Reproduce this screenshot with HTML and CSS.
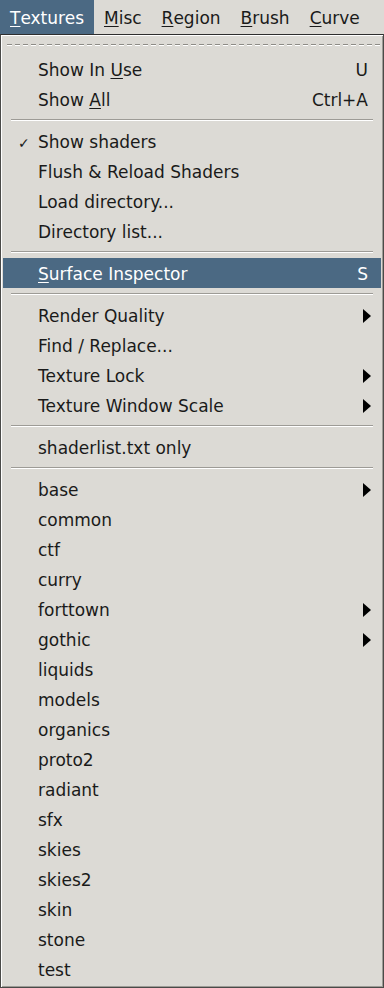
FILE: index.html
```html
<!DOCTYPE html>
<html lang="en">
<head>
    <meta charset="UTF-8">
    <meta name="viewport" content="width=device-width, initial-scale=1.0">
    <title>Textures menu</title>
    <link rel="stylesheet" href="styles.css">
</head>
<body>
    <div class="menubar">
        <span class="bar-item open"><u>T</u>extures</span>
        <span class="bar-item"><u>M</u>isc</span>
        <span class="bar-item"><u>R</u>egion</span>
        <span class="bar-item"><u>B</u>rush</span>
        <span class="bar-item"><u>C</u>urve</span>
    </div>

    <div class="menu">
        <div class="tearoff"></div>

        <div class="item"><span class="label">Show In <u>U</u>se</span><span class="accel">U</span></div>
        <div class="item"><span class="label">Show <u>A</u>ll</span><span class="accel">Ctrl+A</span></div>
        <div class="sep"></div>

        <div class="item"><span class="check">&#10003;</span><span class="label">Show shaders</span></div>
        <div class="item"><span class="label">Flush &amp; Reload Shaders</span></div>
        <div class="item"><span class="label">Load directory...</span></div>
        <div class="item"><span class="label">Directory list...</span></div>
        <div class="sep"></div>

        <div class="item active"><span class="label"><u>S</u>urface Inspector</span><span class="accel">S</span></div>
        <div class="sep"></div>

        <div class="item"><span class="label">Render Quality</span><span class="arrow"></span></div>
        <div class="item"><span class="label">Find / Replace...</span></div>
        <div class="item"><span class="label">Texture Lock</span><span class="arrow"></span></div>
        <div class="item"><span class="label">Texture Window Scale</span><span class="arrow"></span></div>
        <div class="sep"></div>

        <div class="item"><span class="label">shaderlist.txt only</span></div>
        <div class="sep"></div>

        <div class="item"><span class="label">base</span><span class="arrow"></span></div>
        <div class="item"><span class="label">common</span></div>
        <div class="item"><span class="label">ctf</span></div>
        <div class="item"><span class="label">curry</span></div>
        <div class="item"><span class="label">forttown</span><span class="arrow"></span></div>
        <div class="item"><span class="label">gothic</span><span class="arrow"></span></div>
        <div class="item"><span class="label">liquids</span></div>
        <div class="item"><span class="label">models</span></div>
        <div class="item"><span class="label">organics</span></div>
        <div class="item"><span class="label">proto2</span></div>
        <div class="item"><span class="label">radiant</span></div>
        <div class="item"><span class="label">sfx</span></div>
        <div class="item"><span class="label">skies</span></div>
        <div class="item"><span class="label">skies2</span></div>
        <div class="item"><span class="label">skin</span></div>
        <div class="item"><span class="label">stone</span></div>
        <div class="item"><span class="label">test</span></div>
    </div>
</body>
</html>
```
FILE: styles.css
```css
body {
    margin: 0;
    background-color: #dcdad5;
    font-family: "DejaVu Sans", Verdana, sans-serif;
    font-size: 17px;
    color: #1a1a1a;
    overflow: hidden;
}

u {
    text-decoration-thickness: 1px;
    text-underline-offset: 2px;
}

.menubar {
    display: flex;
    height: 34px;
    white-space: nowrap;
}

.bar-item {
    display: flex;
    align-items: center;
    padding: 1px 10px 0;
}

.bar-item.open {
    background-color: #4b6983;
    color: #fff;
}

.menu {
    width: 384px;
    height: 954px;
    box-sizing: border-box;
    border: 1px solid #4a4a48;
    border-top-color: #2e2e2e;
    box-shadow: inset 1px 1px 0 #ffffff, inset -1px -1px 0 #9d9b96;
    padding: 0 2px;
}

.tearoff {
    height: 19px;
    background-image:
        repeating-linear-gradient(to right, #8d8b86 0 5px, transparent 5px 8px),
        repeating-linear-gradient(to right, #ffffff 0 5px, transparent 5px 8px);
    background-size: 100% 1px, 100% 1px;
    background-position: 4px 9px, 4px 10px;
    background-repeat: no-repeat;
}

.item {
    display: flex;
    align-items: center;
    box-sizing: border-box;
    height: 30px;
    padding: 2px 13px 0 35px;
    position: relative;
    white-space: nowrap;
}

.item .label {
    flex: 1;
}

.item.active {
    background-color: #4b6983;
    color: #fff;
}

.accel {
    margin-left: 20px;
}

.check {
    position: absolute;
    left: 15px;
    font-size: 14px;
    font-weight: bold;
    top: 9px;
}

.arrow {
    width: 0;
    height: 0;
    border-top: 7px solid transparent;
    border-bottom: 7px solid transparent;
    border-left: 8px solid #000;
    margin-right: -3px;
}

.sep {
    height: 12px;
    margin: 0 8px;
    background-image: linear-gradient(#9d9b96, #9d9b96), linear-gradient(#ffffff, #ffffff);
    background-size: 100% 1px, 100% 1px;
    background-position: 0 5px, 0 6px;
    background-repeat: no-repeat;
}
```
